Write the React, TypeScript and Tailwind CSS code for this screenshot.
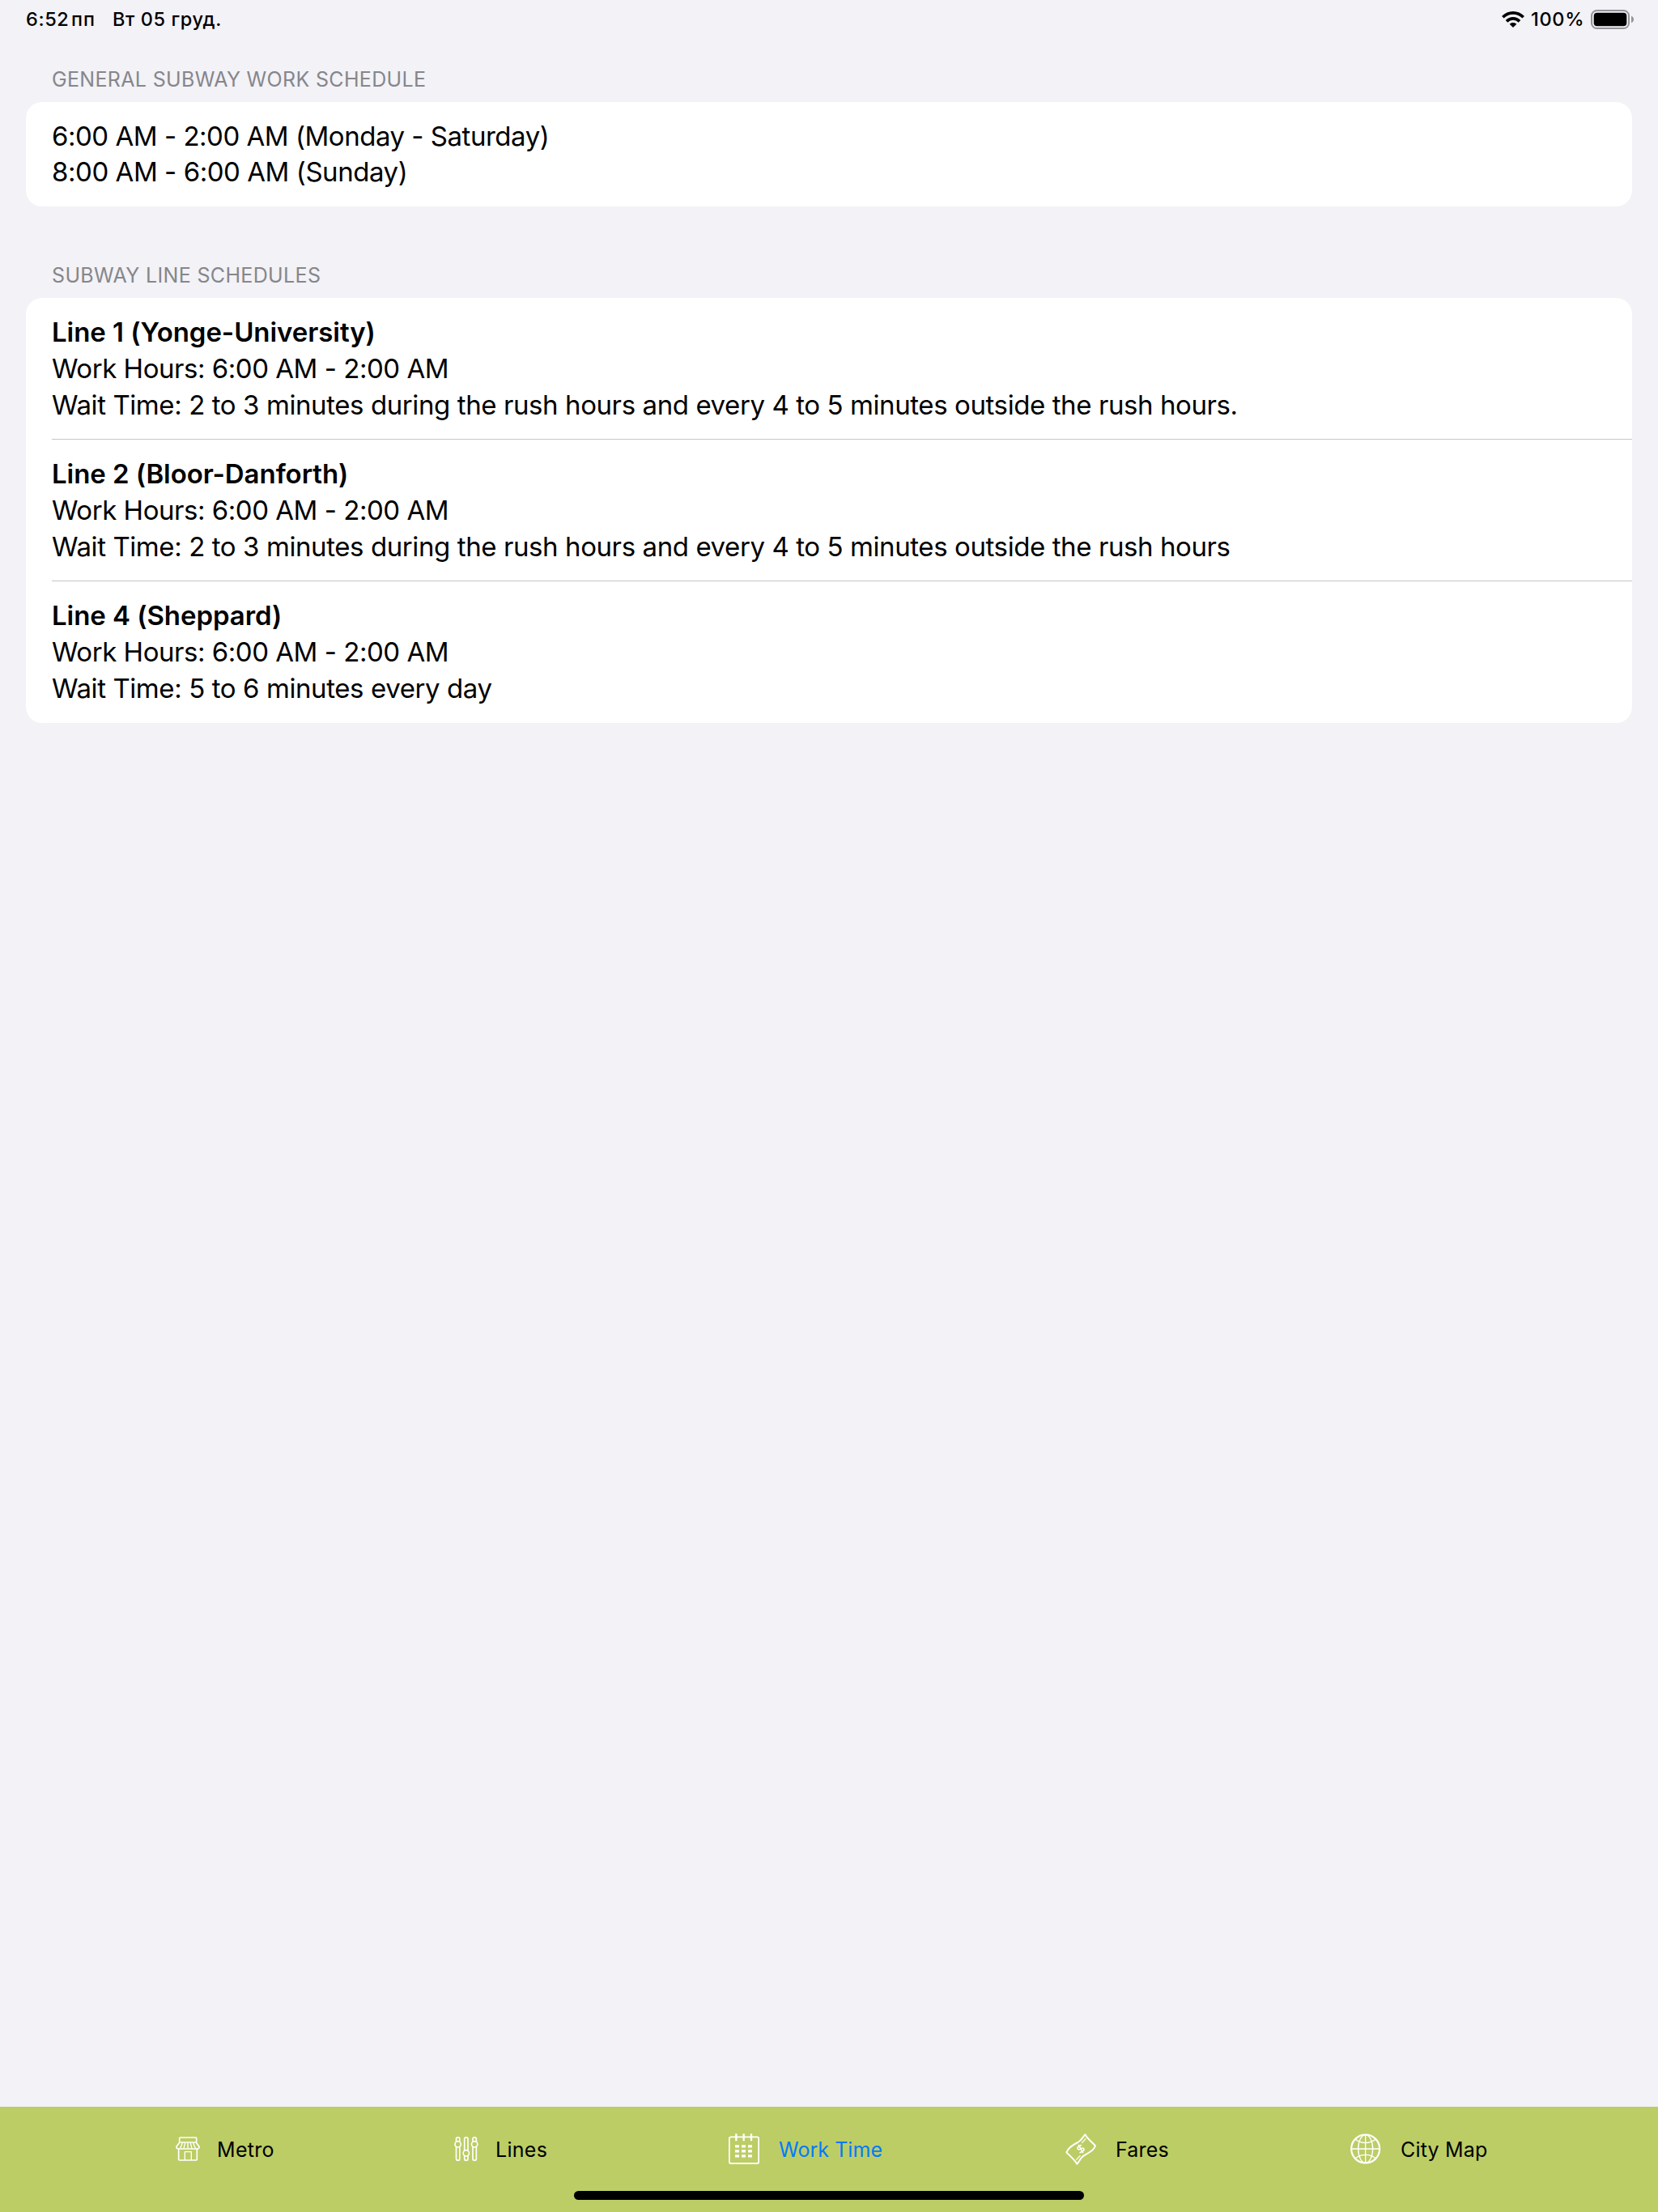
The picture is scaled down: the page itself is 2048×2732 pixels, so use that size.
import React from 'react';
import { DollarSign } from 'lucide-react';
import clsx from 'clsx';

const generalSchedule = [
  { text: '6:00 AM - 2:00 AM (Monday - Saturday)', tracking: 'tracking-[-0.48px]' },
  { text: '8:00 AM - 6:00 AM (Sunday)', tracking: 'tracking-[-0.45px]' },
];

const subwayLines = [
  {
    title: 'Line 1 (Yonge-University)',
    hours: 'Work Hours: 6:00 AM - 2:00 AM',
    wait: 'Wait Time: 2 to 3 minutes during the rush hours and every 4 to 5 minutes outside the rush hours.',
  },
  {
    title: 'Line 2 (Bloor-Danforth)',
    hours: 'Work Hours: 6:00 AM - 2:00 AM',
    wait: 'Wait Time: 2 to 3 minutes during the rush hours and every 4 to 5 minutes outside the rush hours',
  },
  {
    title: 'Line 4 (Sheppard)',
    hours: 'Work Hours: 6:00 AM - 2:00 AM',
    wait: 'Wait Time: 5 to 6 minutes every day',
  },
];

const WifiIcon = () => (
  <svg className="h-5 w-7" viewBox="0 0 84 60" fill="none" stroke="#000" strokeWidth="11">
    <path d="M4 22C25 0 59 0 80 22" />
    <path d="M18 37C32 23 52 23 66 37" />
    <path d="M42 60L29 47C36 40 48 40 55 47Z" fill="#000" stroke="none" />
  </svg>
);

const BatteryIcon = () => (
  <svg className="h-6 w-[53px]" viewBox="0 0 53 24">
    <rect x="1" y="1" width="46" height="22" rx="6.5" fill="none" stroke="#949498" strokeWidth="2" />
    <rect x="3.7" y="3.7" width="40.6" height="16.6" rx="4" fill="#000" />
    <path d="M50 7.8C52 8.6 53 10.2 53 12S52 15.4 50 16.2Z" fill="#949498" />
  </svg>
);

const StoreIcon = () => (
  <svg className="h-[30px] w-[30px]" viewBox="0 0 90 90" fill="none" stroke="#fff" strokeWidth="5" strokeLinejoin="round">
    <rect x="14" y="3" width="63" height="18" rx="2" />
    <path d="M14 22L3 37C2 43 6 45 11 45H79C84 45 88 43 87 37L76 22" />
    <path d="M25 23L17 43M35 23L30 43M45 23V43M55 23L60 43M65 23L73 43" strokeWidth="4" />
    <path d="M11 44V84Q11 87 14 87H76Q79 87 79 84V44" />
    <path d="M34 87V56H58V87" strokeWidth="4" />
  </svg>
);

const SlidersIcon = () => (
  <svg className="h-[30px] w-[30px]" viewBox="0 0 90 90" fill="none" stroke="#fff" strokeWidth="5">
    <rect x="7.5" y="2.5" width="13" height="85" rx="6" />
    <rect x="38" y="2.5" width="13" height="85" rx="6" />
    <rect x="69" y="2.5" width="13" height="85" rx="6" />
    <circle cx="14" cy="28" r="11" fill="#bccd65" />
    <circle cx="44.5" cy="61" r="11" fill="#bccd65" />
    <circle cx="75.5" cy="28" r="11" fill="#bccd65" />
  </svg>
);

const CalendarIcon = () => (
  <svg className="h-[38px] w-[38px]" viewBox="0 0 114 114" fill="none" stroke="#fff">
    <rect x="2.5" y="13" width="109" height="98" rx="6" strokeWidth="5.5" />
    <path d="M28 1V28M56 1V28M84 1V28" strokeWidth="7" />
    <path d="M24 47.5H87M24 65.5H87M24 83.5H87" strokeWidth="9.5" strokeDasharray="15 9" />
  </svg>
);

const BanknoteIcon = () => (
  <svg className="h-[39px] w-[38px]" viewBox="0 0 114 117" fill="none" stroke="#fff" strokeWidth="6" strokeLinejoin="round" strokeLinecap="round">
    <path d="M73 4C65 12 62 24 46 33C28 42 11 52 4 70C16 82 34 97 43 113C53 104 54 92 67 83C84 72 105 66 111 46C103 36 83 22 73 4Z" />
    <path d="M62 34L75 20M41 97L54 83" strokeWidth="4" />
    <g transform="rotate(-30 57 57)">
      <DollarSign x="38" y="38" width="38" height="38" stroke="#fff" fill="none" strokeWidth={3} />
    </g>
  </svg>
);

const GlobeIcon = () => (
  <svg className="h-[38px] w-[38px]" viewBox="0 0 114 114" fill="none" stroke="#fff" strokeWidth="4">
    <circle cx="56" cy="57" r="52.5" strokeWidth="6.5" />
    <ellipse cx="56" cy="57" rx="27" ry="52" />
    <path d="M56 4V110M3 57H109" />
    <path d="M19 22C39 39 73 39 93 22M19 92C39 75 73 75 93 92" />
  </svg>
);

const tabs = [
  { label: 'Metro', icon: StoreIcon, className: 'ml-[217px] w-[344px] gap-[21px] tracking-[0.3px]' },
  { label: 'Lines', icon: SlidersIcon, className: 'w-[339px] gap-[21px] tracking-[0.3px]' },
  { label: 'Work Time', icon: CalendarIcon, className: 'w-[416px] gap-6 tracking-[0.05px]', active: true },
  { label: 'Fares', icon: BanknoteIcon, className: 'w-[352px] gap-6 tracking-[0.2px]' },
  { label: 'City Map', icon: GlobeIcon, className: 'gap-6 tracking-[0.2px]' },
];

export default function App() {
  return (
    <div className="flex h-[2732px] w-[2048px] flex-col bg-[#f2f2f7] font-[Inter,'Liberation_Sans',sans-serif] text-black">
      {/* Status bar */}
      <header className="flex h-12 shrink-0 items-center pl-8 pr-[30px] text-[23.5px] font-medium tracking-[0.6px]">
        <span className="w-[56px]">6:52</span>
        <span className="w-[51px] tracking-[1px]">пп</span>
        <span>Вт 05 груд.</span>
        <div className="ml-auto flex items-center">
          <WifiIcon />
          <span className="ml-2 w-[74px] tracking-[0.7px]">100%</span>
          <BatteryIcon />
        </div>
      </header>

      <main className="flex flex-1 flex-col px-8 pt-[34px]">
        <h2 className="mb-3 pl-8 text-[25px] leading-8 tracking-[0.33px] text-[#86868b]">GENERAL SUBWAY WORK SCHEDULE</h2>
        <section className="rounded-[20px] bg-white px-8 pb-[21px] pt-5 text-[33px] leading-[44px]">
          {generalSchedule.map((row) => (
            <p key={row.text} className={row.tracking}>{row.text}</p>
          ))}
        </section>

        <h2 className="mb-3 mt-[69px] pl-8 text-[25px] leading-8 tracking-[0.34px] text-[#86868b]">SUBWAY LINE SCHEDULES</h2>
        <section className="rounded-[20px] bg-white pl-8 text-[33px] leading-[45px]">
          {subwayLines.map((line, i) => (
            <div
              key={line.title}
              className={clsx('pt-5', i < subwayLines.length - 1 ? 'border-b border-[#c6c6c8] pb-[19px]' : 'pb-5')}
            >
              <h3 className="font-semibold tracking-[-0.06px]">{line.title}</h3>
              <p className="tracking-[-0.47px]">{line.hours}</p>
              <p className="tracking-[-0.41px]">{line.wait}</p>
            </div>
          ))}
        </section>
      </main>

      {/* Tab bar */}
      <nav className="flex h-[130px] shrink-0 flex-col items-center bg-[#bccd65]">
        <div className="flex h-[104px] w-full items-center text-[25px]">
          {tabs.map(({ label, icon: Icon, className, active }) => (
            <div key={label} className={clsx('flex items-center', className, active && 'text-[#007aff]')}>
              <Icon />
              <span className="pt-1">{label}</span>
            </div>
          ))}
        </div>
        {/* Home indicator */}
        <div className="h-[11px] w-[630px] rounded-full bg-black" />
      </nav>
    </div>
  );
}
